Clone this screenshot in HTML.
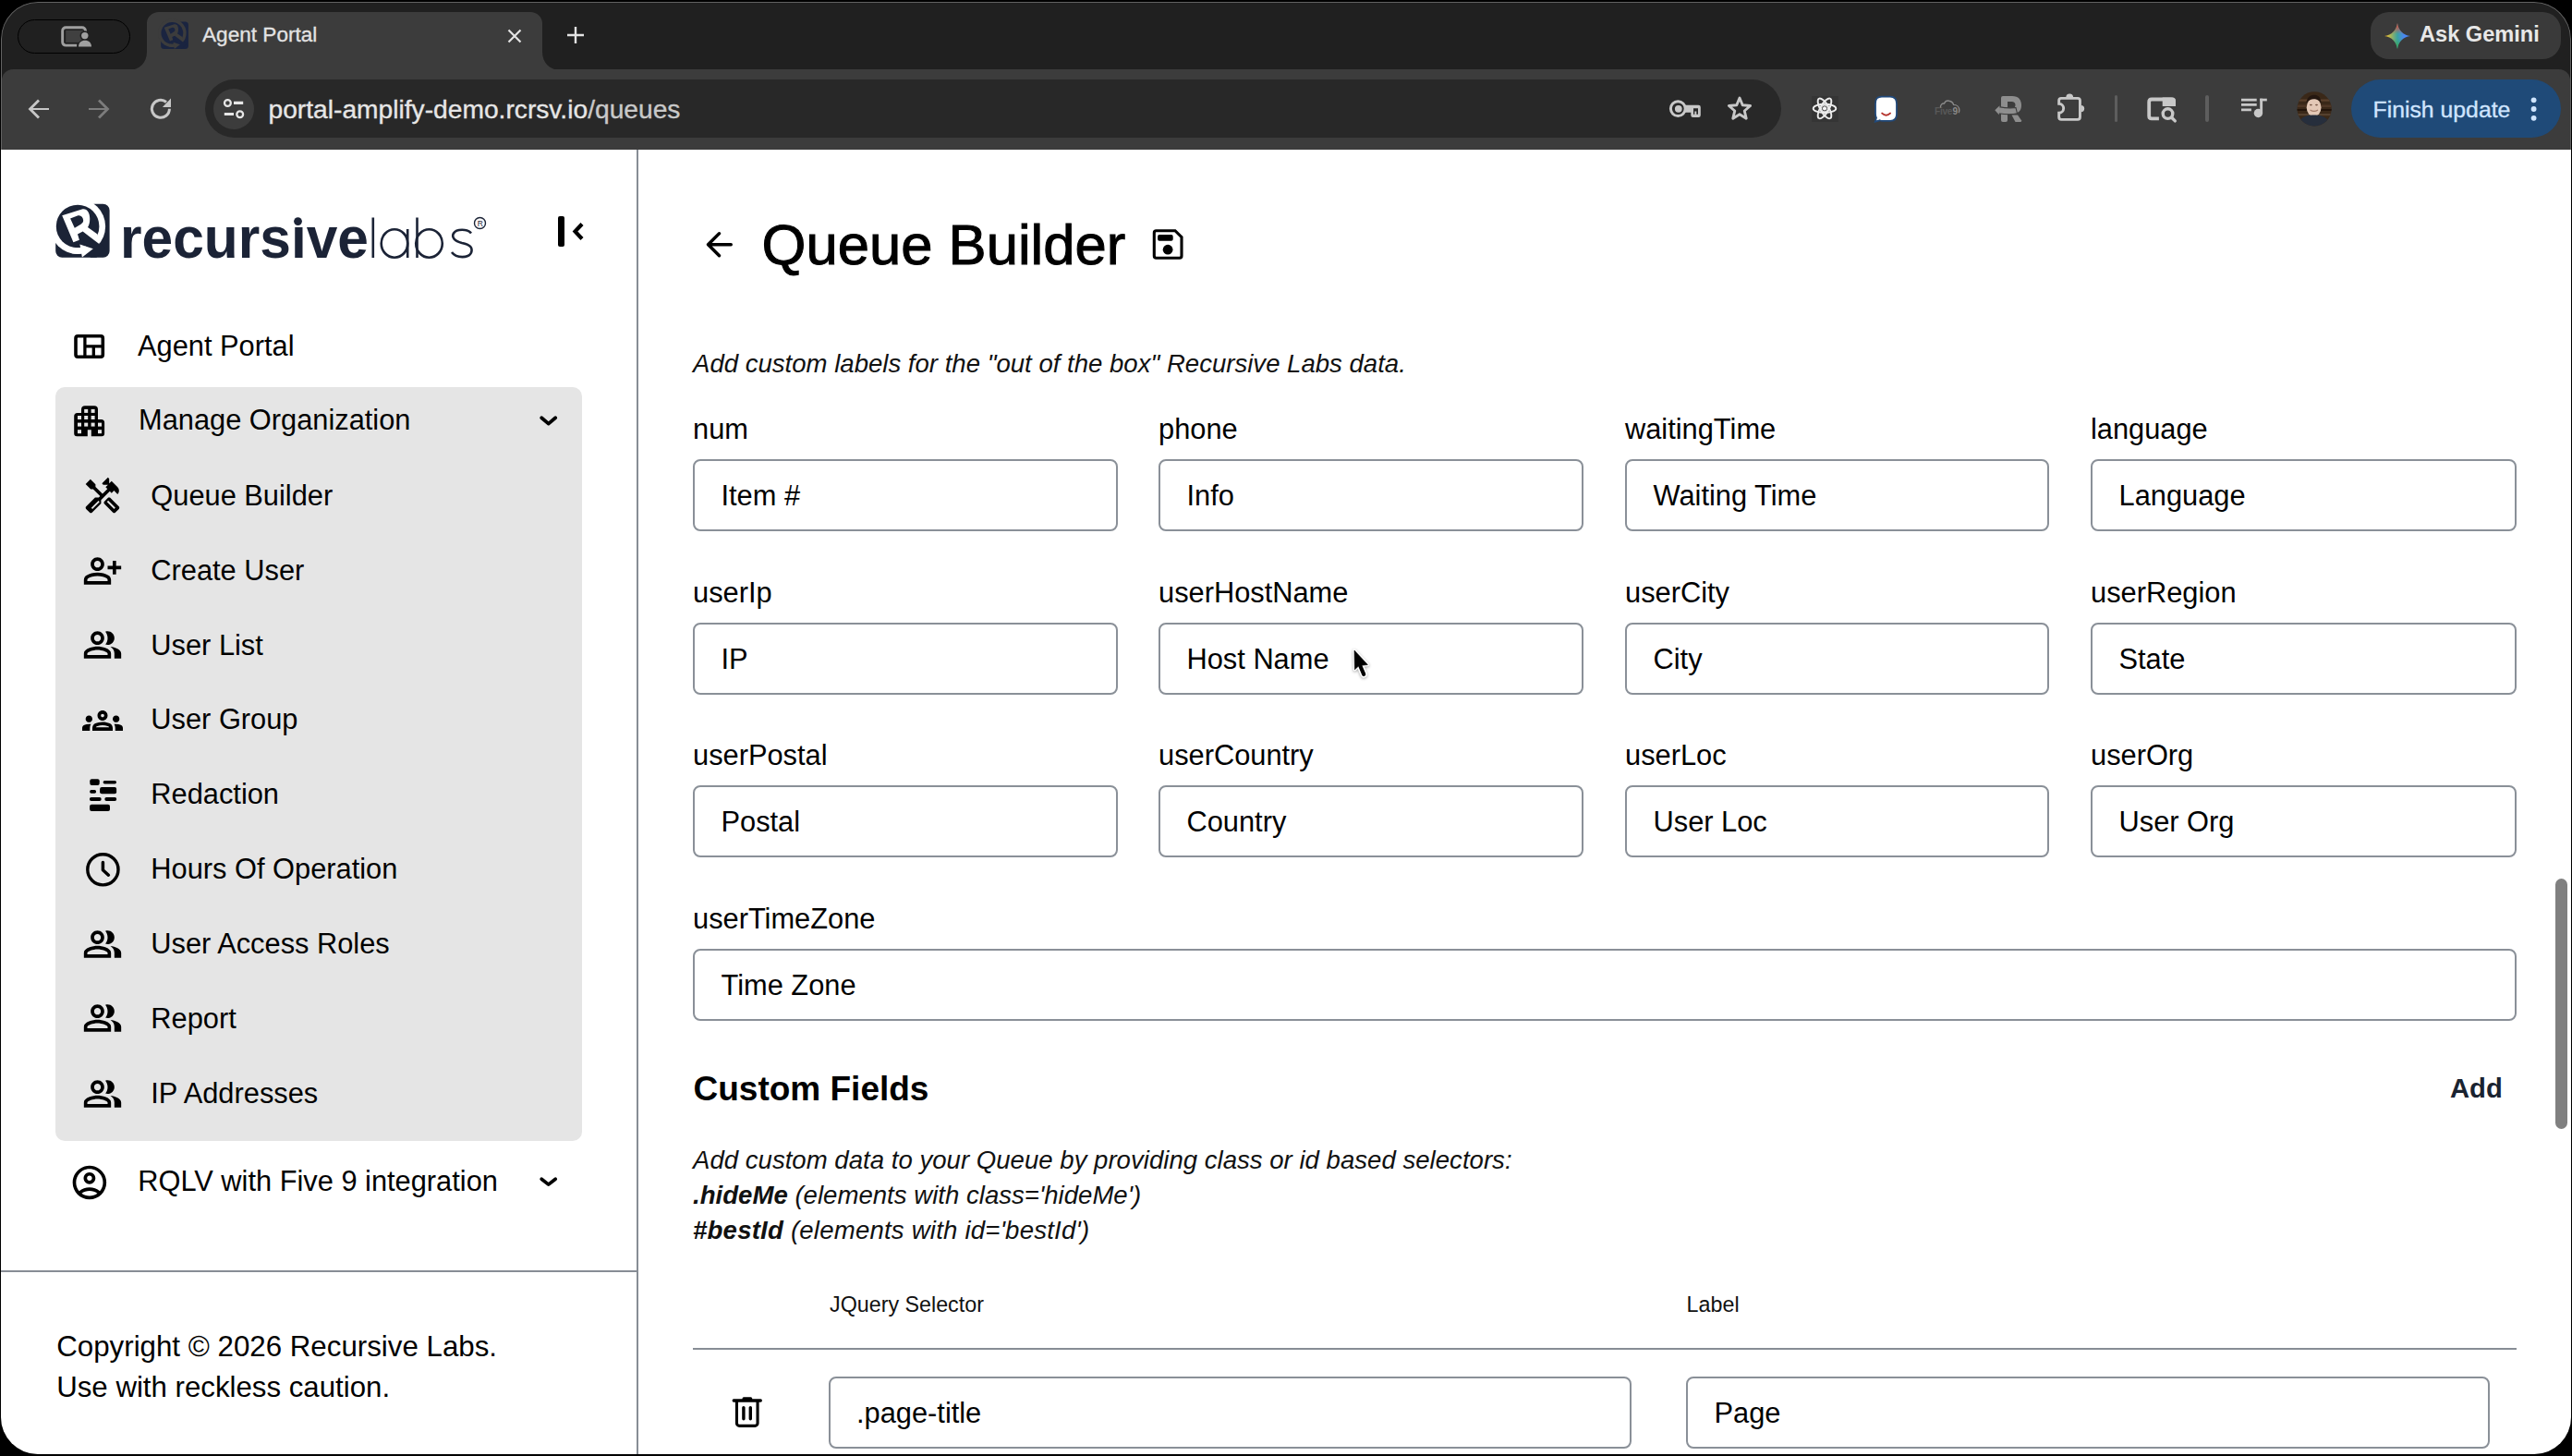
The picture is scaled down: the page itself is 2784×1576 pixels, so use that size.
<!DOCTYPE html><html><head><meta charset="utf-8"><style>
html,body{margin:0;padding:0;}
body{width:2784px;height:1576px;background:#000;position:relative;overflow:hidden;font-family:"Liberation Sans", sans-serif;}
#win{position:absolute;left:0;top:0;width:2784px;height:1576px;clip-path:inset(2px 1px 2px 1px round 40px);background:#202020;}
#page{position:absolute;left:0;top:162px;width:2784px;height:1420px;background:#fff;}
.t{position:absolute;white-space:nowrap;line-height:1;}
svg{overflow:visible}
</style></head><body>
<div id="win">
<div style="position:absolute;left:19px;top:21px;width:122px;height:37px;border:1.6px solid #000;border-radius:19px;box-sizing:border-box;"></div>
<svg style="position:absolute;left:58px;top:24px;" width="1" height="1" viewBox="0 0 1 1"><path d="M25.2 25.15 H13.2 A3.55 3.55 0 0 1 9.65 21.6 V9.3 A3.55 3.55 0 0 1 13.2 5.75 H30.9 A3.55 3.55 0 0 1 34.45 9.3 V9.9" fill="none" stroke="#a0a0a0" stroke-width="2.9"/><rect x="13.2" y="8.9" width="19" height="13" fill="#404040"/><circle cx="33.8" cy="14.6" r="5.3" fill="#212121"/><path d="M25.5 28 C25.5 21.6 29.5 18.4 34 18.4 C38.5 18.4 42.5 21.6 42.5 28 Z" fill="#212121"/><circle cx="33.8" cy="14.6" r="3.7" fill="#a0a0a0"/><path d="M27 26.6 C27 22.5 30 19.8 34 19.8 C38 19.8 41 22.5 41 26.6 Z" fill="#a0a0a0"/></svg>
<svg style="position:absolute;left:139px;top:12px" width="468" height="64" viewBox="0 0 468 64"><path d="M0 64 C12 64 20 56 20 44 V13 C20 6 26 1 33 1 H435 C442 1 448 6 448 13 V44 C448 56 456 64 468 64 Z" fill="#3c3c3c"/></svg>
<svg style="position:absolute;left:171.56px;top:21.3px" width="34.7" height="34.7" viewBox="0 0 68 68"><defs><clipPath id="fvc"><rect x="4.2" y="4.7" width="58.4" height="58.1" rx="7"/></clipPath></defs><path d="M40 4.7 H55.6 A7 7 0 0 1 62.6 11.7 V55.8 A7 7 0 0 1 55.6 62.8 H11.2 A7 7 0 0 1 4.2 55.8 V40 Z" fill="#1a2440"/><circle cx="28.1" cy="29" r="30" fill="#3c3c3c"/><path d="M45.7 0 L45.7 4.7 A30 30 0 0 0 4.2 47.1 L0 47.1 L0 0 Z" fill="#3c3c3c"/><circle cx="28.1" cy="29" r="23.3" fill="#1a2440"/><g clip-path="url(#fvc)"><path d="M28.1 29 L58 52 L44 68 Z" fill="#1a2440"/></g><path d="M30.4 48.5 L44.8 53.2 L32.9 62.6 Z" fill="#3c3c3c"/><path d="M24 52 A23.3 23.3 0 0 0 31.5 52.1 L32 58.5 A30 30 0 0 1 22 58.2 Z" fill="#3c3c3c"/><path d="M11.2 17.3 L32.7 10.5 C38.5 9 42 15 41.1 23.4 C40.8 26 40 28.5 39 29.9 L49.5 37.4 L51.6 48.3 L33.6 34.6 L28 37.4 L29.9 43.7 L23.4 46.2 Z M20.1 20.6 L24.8 30.8 L31.5 26.7 C33.2 25.6 34.4 24.2 34.1 22.2 C33.8 19 31.5 16.5 28.5 17.3 Z" fill="#3c3c3c" fill-rule="evenodd"/></svg>
<div class="t " style="left:219px;top:27.37px;font-size:22.6px;color:#e3e3e3;-webkit-text-stroke:0.3px #e3e3e3;">Agent Portal</div>
<svg style="position:absolute;left:549px;top:31px;" width="16" height="16" viewBox="0 0 16 16"><path d="M1.5 1.5 L14.5 14.5 M14.5 1.5 L1.5 14.5" stroke="#e3e3e3" stroke-width="2.2"/></svg>
<svg style="position:absolute;left:613px;top:28px;" width="20" height="20" viewBox="0 0 20 20"><path d="M10 1 V19 M1 10 H19" stroke="#e3e3e3" stroke-width="2.4"/></svg>
<div style="position:absolute;left:2566px;top:13px;width:206px;height:51px;background:#3a3a3a;border-radius:20px;"></div>
<svg style="position:absolute;left:2581px;top:25px" width="28" height="28" viewBox="0 0 28 28"><defs><linearGradient id="gh" x1="0" y1="0" x2="1" y2="0"><stop offset="0.05" stop-color="#f6c026"/><stop offset="0.5" stop-color="#3aa3a0"/><stop offset="0.75" stop-color="#4a86f0"/><stop offset="1" stop-color="#4285f4"/></linearGradient><linearGradient id="gv" x1="0" y1="0" x2="0" y2="1"><stop offset="0.05" stop-color="#e9473a"/><stop offset="0.42" stop-color="#e9473a" stop-opacity="0"/><stop offset="0.6" stop-color="#34a853" stop-opacity="0"/><stop offset="0.95" stop-color="#34a853"/></linearGradient></defs><path d="M14 0 C14.8 7.5 20.5 13.2 28 14 C20.5 14.8 14.8 20.5 14 28 C13.2 20.5 7.5 14.8 0 14 C7.5 13.2 13.2 7.5 14 0Z" fill="url(#gh)"/><path d="M14 0 C14.8 7.5 20.5 13.2 28 14 C20.5 14.8 14.8 20.5 14 28 C13.2 20.5 7.5 14.8 0 14 C7.5 13.2 13.2 7.5 14 0Z" fill="url(#gv)"/></svg>
<div class="t " style="left:2619px;top:26.02px;font-size:23.6px;color:#e8e8e8;font-weight:700;">Ask Gemini</div>
<div style="position:absolute;left:2px;top:75px;width:2780px;height:87px;background:#3c3c3c;border-radius:12px 12px 0 0;"></div>
<svg style="position:absolute;left:29px;top:106px;" width="25" height="24" viewBox="0 0 25 24"><path d="M24 11H6.5l7.5-7.5L12 1.5 1.5 12 12 22.5l2-2L6.5 13H24z" fill="#c7c7c7" transform="translate(0,0)"/></svg>
<svg style="position:absolute;left:95px;top:106px;" width="25" height="24" viewBox="0 0 25 24"><path d="M1 11h17.5L11 3.5 13 1.5 23.5 12 13 22.5l-2-2L18.5 13H1z" fill="#7c7c7c"/></svg>
<svg style="position:absolute;left:155px;top:100px;" width="40" height="36" viewBox="0 0 40 36"><path d="M28.4 17.75 A9.5 9.5 0 1 1 25.0 10.5" fill="none" stroke="#c7c7c7" stroke-width="3"/><path d="M30 6.55 V16.1 H20.9 Z" fill="#c7c7c7"/></svg>
<div style="position:absolute;left:222px;top:86px;width:1706px;height:63px;background:#282828;border-radius:32px;"></div>
<div style="position:absolute;left:231px;top:96px;width:44px;height:44px;background:#3c3c3c;border-radius:50%;"></div>
<svg style="position:absolute;left:240px;top:106px;" width="26" height="24" viewBox="0 0 26 24"><circle cx="6.4" cy="5.5" r="3.4" fill="none" stroke="#e6e6e6" stroke-width="2.3"/><path d="M13 5.45 H23.2" stroke="#e6e6e6" stroke-width="3.2"/><circle cx="19.7" cy="17.7" r="3.4" fill="none" stroke="#e6e6e6" stroke-width="2.3"/><path d="M2.8 17.5 H13" stroke="#e6e6e6" stroke-width="3.2"/></svg>
<div class="t " style="left:290.5px;top:103.63px;font-size:28.2px;color:#e6e6e6;-webkit-text-stroke:0.35px #e6e6e6;">portal-amplify-demo.rcrsv.io<span style="color:#c9c9c9;-webkit-text-stroke-color:#c9c9c9">/queues</span></div>
<svg style="position:absolute;left:1795px;top:95px;" width="1" height="1" viewBox="0 0 1 1"><circle cx="21.3" cy="22.6" r="7.9" fill="none" stroke="#c8c8c8" stroke-width="3"/><circle cx="21.8" cy="22.8" r="3.9" fill="#c8c8c8"/><path d="M28 18.8 H43.5 Q45.8 18.8 45.8 21.1 V29.7 Q45.8 32 43.5 32 H37.6 Q35.3 32 35.3 29.7 V26.8 H28 Z M38 22.3 V28.8 H39.3 V25.5 H41.3 V28.8 H43 V22.3 Z" fill="#c8c8c8" fill-rule="evenodd"/></svg>
<svg style="position:absolute;left:1867px;top:102px;" width="32" height="30" viewBox="0 0 32 30"><path d="M16 4 L19.2 11.75 L27.6 12.5 L21.25 18 L23.2 26.2 L16 21.8 L8.8 26.2 L10.75 18 L4.4 12.5 L12.8 11.75 Z" fill="none" stroke="#c8c8c8" stroke-width="2.9" stroke-linejoin="round"/></svg>
<div style="position:absolute;left:1961px;top:103.6px;width:29px;height:28.4px;background:#353535;"></div>
<svg style="position:absolute;left:1961px;top:103px;" width="29" height="29" viewBox="0 0 29 29"><g fill="none" stroke="#ececec" stroke-width="1.9"><ellipse cx="14" cy="14.4" rx="12.3" ry="4.6"/><ellipse cx="14" cy="14.4" rx="12.3" ry="4.6" transform="rotate(60 14 14.4)"/><ellipse cx="14" cy="14.4" rx="12.3" ry="4.6" transform="rotate(-60 14 14.4)"/></g><circle cx="14" cy="14.4" r="3.4" fill="#353535" stroke="#ececec" stroke-width="1.2"/><circle cx="14" cy="14.4" r="2.1" fill="#f4f4f4"/></svg>
<svg style="position:absolute;left:2027px;top:102px;" width="1" height="1" viewBox="0 0 1 1"><path d="M10 2.6 H19 C24 2.6 26 5 26 10 V21.5 C26 26.5 24 28.9 19 28.9 H11 C9.5 28.9 8.5 28.7 7.7 28.3 L2.8 29.7 L4 25.5 C3.2 24.5 3 23 3 21 V10 C3 5 5 2.6 10 2.6 Z" fill="#fff" stroke="#21497a" stroke-width="1.8"/><path d="M10.2 20.6 Q14.6 24.8 19 20.6" fill="none" stroke="#b5352e" stroke-width="2" stroke-linecap="round"/></svg>
<svg style="position:absolute;left:2080px;top:95px;" width="1" height="1" viewBox="0 0 1 1"><path d="M20.5 22 C20 18.5 22 16.8 24.5 17 C25.5 14.6 27.7 13.8 29.8 14.2 C32.2 14.5 34 16.2 34.6 18.4 C37.8 18.4 40.8 20.5 40.8 24.5 C40.8 25.8 40.4 26.5 40 27" fill="none" stroke="#8a8a8a" stroke-width="1.4"/><text x="14" y="28.7" font-family="Liberation Sans" font-size="10.2" font-weight="700" fill="#585858" letter-spacing="-0.3">Five</text><text x="33.5" y="28.7" font-family="Liberation Sans" font-size="10.2" font-weight="700" fill="#8a8a8a">9</text></svg>
<svg style="position:absolute;left:0px;top:0px;" width="1" height="1" viewBox="0 0 1 1"><g fill="#8e8e8e"><path d="M2166 106 A2 2 0 0 1 2168 104 H2178 C2185 104 2188 108 2188 114 C2188 120.5 2184 123 2178 123 H2166 Z M2173 110 V117.3 H2177.5 C2180 117.3 2181.5 116.2 2181.5 113.7 C2181.5 111.3 2180 110 2177.5 110 Z" fill-rule="evenodd"/><path d="M2166 123 H2173 V130 A2 2 0 0 1 2171 132 H2168 A2 2 0 0 1 2166 130 Z"/><path d="M2177.5 124.5 H2184 L2188 130.2 A1.3 1.3 0 0 1 2187 132 H2181.5 Z"/></g><path d="M2163.5 115.6 C2170 116.8 2176 117.2 2182 116.5 L2183.5 122.8 C2177 124.3 2170 123.8 2163.5 122.8 Z" fill="#8e8e8e" stroke="#3c3c3c" stroke-width="1.1"/><path d="M2159.3 119.3 L2164.5 114.2 L2163.8 124.3 Z" fill="#8e8e8e"/></svg>
<svg style="position:absolute;left:2215px;top:95px;" width="1" height="1" viewBox="0 0 1 1"><path d="M13.65 17.3 V13.85 A2.5 2.5 0 0 1 16.15 11.35 H33.95 A2.5 2.5 0 0 1 36.45 13.85 V31.85 A2.5 2.5 0 0 1 33.95 34.35 H16.15 A2.5 2.5 0 0 1 13.65 31.85 V27.3 A5 5 0 0 0 13.65 17.3 Z" fill="none" stroke="#c8c8c8" stroke-width="2.9"/><path d="M21.3 10.5 A3.9 3.9 0 0 1 29.1 10.5 Z M37.5 18.9 A3.7 3.7 0 0 1 37.5 26.3 Z" fill="#c8c8c8"/></svg>
<div style="position:absolute;left:2288.5px;top:103px;width:3.4px;height:29.4px;background:#5e5e5e;border-radius:2px;"></div>
<svg style="position:absolute;left:0px;top:0px;" width="1" height="1" viewBox="0 0 1 1"><path d="M2336.9 128.3 H2329 Q2326.2 128.3 2326.2 125.5 V110.3 Q2326.2 107.5 2329 107.5 H2350 Q2353.1 107.5 2353.1 110.6 V114.9" fill="none" stroke="#c8c8c8" stroke-width="3.8"/><path d="M2340.7 105.6 H2351.5 Q2355 105.6 2355 109.1 V114.9 H2340.7 Z" fill="#c8c8c8"/><circle cx="2346.5" cy="123.1" r="5.3" fill="none" stroke="#c8c8c8" stroke-width="3.4"/><path d="M2350.6 127.2 L2354.3 130.9" stroke="#c8c8c8" stroke-width="3.4" stroke-linecap="round"/></svg>
<div style="position:absolute;left:2387.3px;top:103px;width:3.4px;height:29.4px;background:#5e5e5e;border-radius:2px;"></div>
<svg style="position:absolute;left:0px;top:0px;" width="1" height="1" viewBox="0 0 1 1"><path d="M2426 108.05 H2442.7 M2426 113.45 H2442.7 M2426 118.95 H2436.9" stroke="#c8c8c8" stroke-width="2.8"/><rect x="2446.2" y="106.7" width="2.9" height="16" fill="#c8c8c8"/><rect x="2446.2" y="106.7" width="7.6" height="2.7" fill="#c8c8c8"/><circle cx="2444.4" cy="122.5" r="4.7" fill="#c8c8c8"/></svg>
<svg style="position:absolute;left:2480px;top:92px;" width="1" height="1" viewBox="0 0 1 1"><defs><clipPath id="av"><circle cx="25.1" cy="25.8" r="18.6"/></clipPath></defs><g clip-path="url(#av)"><rect x="0" y="0" width="52" height="52" fill="#3a2818"/><rect x="0" y="15.5" width="52" height="2.2" fill="#5b412c"/><rect x="0" y="21.5" width="52" height="2.5" fill="#4e3624"/><rect x="0" y="26" width="52" height="2" fill="#22140a"/><rect x="0" y="31" width="52" height="2.2" fill="#54402e"/><ellipse cx="24.6" cy="24.3" rx="7.9" ry="9.9" fill="#e3c8b6"/><path d="M16.4 20 C16.6 13 21.5 10.7 25 10.7 C29 10.7 32.3 13.2 32.6 20 C30.4 16.2 27.6 15.2 24.6 15.2 C21.3 15.2 18.6 16.6 16.4 20 Z" fill="#241710"/><ellipse cx="21.4" cy="21.6" rx="1.5" ry="0.8" fill="#7a5a48"/><ellipse cx="27.5" cy="21.6" rx="1.5" ry="0.8" fill="#7a5a48"/><path d="M20.5 27 Q24.8 29.8 29 27" fill="none" stroke="#a77f6c" stroke-width="1.1"/><path d="M6 46 C8 36 15 32 24.8 32.6 C34 32 41 36 43.5 46 Z" fill="#262e3c"/></g></svg>
<div style="position:absolute;left:2545px;top:86px;width:227px;height:63px;background:#1f4a78;border-radius:32px;"></div>
<div class="t " style="left:2568.5px;top:106.51px;font-size:24.8px;color:#cfe5ff;-webkit-text-stroke:0.35px #cfe5ff;">Finish update</div>
<svg style="position:absolute;left:0px;top:0px;" width="1" height="1" viewBox="0 0 1 1"><circle cx="2742.6" cy="108.3" r="2.9" fill="#cfe5ff"/><circle cx="2742.6" cy="118" r="2.9" fill="#cfe5ff"/><circle cx="2742.6" cy="127.8" r="2.9" fill="#cfe5ff"/></svg>
<div style="position:absolute;left:1px;top:2px;width:2782px;height:300px;border:1px solid #626262;border-bottom:none;border-radius:40px 40px 0 0;box-sizing:border-box;"></div>
<div id="page"></div>
<div style="position:absolute;left:689px;top:162px;width:2px;height:1420px;background:#878d95;"></div>
<div style="position:absolute;left:1px;top:1375px;width:689px;height:2px;background:#878d95;"></div>
<svg style="position:absolute;left:56px;top:216px;" width="68" height="68" viewBox="0 0 68 68"><defs><clipPath id="lgc"><rect x="4.2" y="4.7" width="58.4" height="58.1" rx="7"/></clipPath></defs><path d="M40 4.7 H55.6 A7 7 0 0 1 62.6 11.7 V55.8 A7 7 0 0 1 55.6 62.8 H11.2 A7 7 0 0 1 4.2 55.8 V40 Z" fill="#1b2336"/><circle cx="28.1" cy="29" r="30" fill="#fff"/><path d="M45.7 0 L45.7 4.7 A30 30 0 0 0 4.2 47.1 L0 47.1 L0 0 Z" fill="#fff"/><circle cx="28.1" cy="29" r="23.3" fill="#1b2336"/><g clip-path="url(#lgc)"><path d="M28.1 29 L58 52 L44 68 Z" fill="#1b2336"/></g><path d="M30.4 48.5 L44.8 53.2 L32.9 62.6 Z" fill="#fff"/><path d="M24 52 A23.3 23.3 0 0 0 31.5 52.1 L32 58.5 A30 30 0 0 1 22 58.2 Z" fill="#fff"/><path d="M11.2 17.3 L32.7 10.5 C38.5 9 42 15 41.1 23.4 C40.8 26 40 28.5 39 29.9 L49.5 37.4 L51.6 48.3 L33.6 34.6 L28 37.4 L29.9 43.7 L23.4 46.2 Z M20.1 20.6 L24.8 30.8 L31.5 26.7 C33.2 25.6 34.4 24.2 34.1 22.2 C33.8 19 31.5 16.5 28.5 17.3 Z" fill="#fff" fill-rule="evenodd"/></svg>
<div class="t" style="left:130px;top:226.11px;font-size:62.6px;font-weight:700;color:#1b2336;transform-origin:0 0;transform:scale(0.966,1);">recursive</div>
<div style="position:absolute;left:317px;top:231px;width:13px;height:13px;background:#fff;"></div>
<svg style="position:absolute;left:0px;top:0px;" width="1" height="1" viewBox="0 0 1 1"><circle cx="322.5" cy="239.6" r="4.4" fill="#1b2336"/></svg>
<svg style="position:absolute;left:398px;top:233px;" width="132" height="48" viewBox="0 0 132 48"><g fill="none" stroke="#1b2336" stroke-width="2.6"><path d="M5.8 2.5 V46"/><ellipse cx="29" cy="30.5" rx="14.3" ry="15.2"/><path d="M43.2 15 V46"/><path d="M53.5 2.5 V46"/><ellipse cx="66.5" cy="30.5" rx="14.3" ry="15.2"/><path d="M112 19.5 C108 14.5 96 14.5 93 19.5 C90.5 24 94 28 102 30 C111 32 114 35 112 40.5 C109.5 46.5 96 47 91 40"/></g><circle cx="121.5" cy="8.5" r="6" fill="none" stroke="#1b2336" stroke-width="1.4"/><text x="118.7" y="11.8" font-family="Liberation Sans" font-size="8.5" fill="#1b2336">R</text></svg>
<div style="position:absolute;left:604px;top:234px;width:7px;height:33px;background:#000;border-radius:2px;"></div>
<svg style="position:absolute;left:619px;top:240px;" width="14" height="21" viewBox="0 0 14 21"><path d="M11 2.5 L3.5 10.5 L11 18.5" fill="none" stroke="#000" stroke-width="4.2" stroke-linejoin="miter"/></svg>
<svg style="position:absolute;left:72px;top:350px;" width="50" height="50" viewBox="0 0 50 50"><rect x="10" y="13.8" width="29.3" height="22.4" rx="2.2" fill="none" stroke="#000" stroke-width="3.6"/><path d="M19.9 13.8 V36.2 M19.9 24.9 H39.3 M29.3 24.9 V36.2" stroke="#000" stroke-width="3.3" fill="none"/></svg>
<div class="t " style="left:149px;top:359.53px;font-size:30.8px;color:#000;">Agent Portal</div>
<div style="position:absolute;left:60px;top:419px;width:570px;height:816px;background:#e5e5e5;border-radius:10px;"></div>
<svg style="position:absolute;left:0px;top:0px;" width="1" height="1" viewBox="0 0 1 1"><path d="M88 443.3 A4 4 0 0 1 92 439.3 H102 A4 4 0 0 1 106 443.3 V454 H109.6 A3.5 3.5 0 0 1 113.1 457.5 V469.3 A3 3 0 0 1 110.1 472.3 H98.8 V465.2 H94.8 V472.3 H83.2 A3 3 0 0 1 80.2 469.3 V450.4 A3.5 3.5 0 0 1 83.7 446.9 H88 Z" fill="#000"/><g fill="#e5e5e5"><rect x="91.2" y="442.9" width="4" height="4"/><rect x="98.6" y="442.9" width="4" height="4"/><rect x="84.0" y="450.0" width="4" height="4"/><rect x="91.2" y="450.0" width="4" height="4"/><rect x="98.6" y="450.0" width="4" height="4"/><rect x="84.0" y="457.6" width="4" height="4"/><rect x="91.2" y="457.6" width="4" height="4"/><rect x="98.6" y="457.6" width="4" height="4"/><rect x="106.0" y="457.6" width="4" height="4"/><rect x="84.0" y="465.2" width="4" height="4"/><rect x="106.0" y="465.2" width="4" height="4"/></g></svg>
<div class="t " style="left:150px;top:439.63px;font-size:30.8px;color:#000;">Manage Organization</div>
<svg style="position:absolute;left:0px;top:0px;" width="1" height="1" viewBox="0 0 1 1"><path d="M586.2 452.3 L593.7 458.6 L601.2 452.3" fill="none" stroke="#000" stroke-width="3.8" stroke-linecap="round" stroke-linejoin="round"/></svg>
<div class="t " style="left:163.3px;top:522.43px;font-size:30.8px;color:#000;">Queue Builder</div>
<div class="t " style="left:163.3px;top:602.63px;font-size:30.8px;color:#000;">Create User</div>
<div class="t " style="left:163.3px;top:683.73px;font-size:30.8px;color:#000;">User List</div>
<div class="t " style="left:163.3px;top:763.93px;font-size:30.8px;color:#000;">User Group</div>
<div class="t " style="left:163.3px;top:845.23px;font-size:30.8px;color:#000;">Redaction</div>
<div class="t " style="left:163.3px;top:925.73px;font-size:30.8px;color:#000;">Hours Of Operation</div>
<div class="t " style="left:163.3px;top:1007.33px;font-size:30.8px;color:#000;">User Access Roles</div>
<div class="t " style="left:163.3px;top:1087.83px;font-size:30.8px;color:#000;">Report</div>
<div class="t " style="left:163.3px;top:1168.93px;font-size:30.8px;color:#000;">IP Addresses</div>
<svg style="position:absolute;left:89.30px;top:514.90px" width="44.0" height="44.0" viewBox="0 0 24 24"><path d="M21.67 18.17l-5.3-5.3h-.99l-2.54 2.54v.99l5.3 5.3c.39.39 1.02.39 1.41 0l2.12-2.12c.39-.38.39-1.02 0-1.41zm-2.83 1.42l-4.24-4.24.71-.71 4.24 4.24-.71.71zM17.34 10.19l1.41-1.41 2.12 2.12c1.17-1.17 1.17-3.07 0-4.24l-3.54-3.54-1.41 1.41V1.71l-.7-.71-3.54 3.54.71.71h2.83l-1.41 1.41 1.06 1.06-2.89 2.89-4.13-4.13V5.06L4.83 2.04 2 4.87 5.03 7.9h1.41l4.13 4.13-.85.85H7.6l-5.3 5.3c-.39.39-.39 1.02 0 1.41l2.12 2.12c.39.39 1.02.39 1.41 0l5.3-5.3v-2.12l5.15-5.15 1.06 1.05zm-7.06 5.24l-4.24 4.24-.71-.71 4.24-4.24.71.71z" fill="#000"/></svg>
<svg style="position:absolute;left:89.35px;top:595.60px" width="44.0" height="44.0" viewBox="0 0 24 24"><path d="M20 9V6h-2v3h-3v2h3v3h2v-3h3V9h-3zM9 12c2.21 0 4-1.79 4-4s-1.79-4-4-4-4 1.79-4 4 1.79 4 4 4zm0-6c1.1 0 2 .9 2 2s-.9 2-2 2-2-.9-2-2 .9-2 2-2zm6.39 8.56C13.71 13.7 11.53 13 9 13s-4.71.7-6.39 1.56C1.61 15.07 1 16.1 1 17.22V20h16v-2.78c0-1.12-.61-2.15-1.61-2.66zM15 18H3v-.78c0-.38.2-.72.52-.88C4.71 15.73 6.63 15 9 15c2.37 0 4.29.73 5.48 1.34.32.16.52.5.52.88V18z" fill="#000"/></svg>
<svg style="position:absolute;left:89.30px;top:676.30px" width="44.0" height="44.0" viewBox="0 0 24 24"><path d="M16.67 13.13C18.04 14.06 19 15.32 19 17v3h4v-3c0-2.18-3.57-3.47-6.33-3.87zM15 12c2.21 0 4-1.79 4-4s-1.79-4-4-4c-.47 0-.91.1-1.33.24C14.5 5.27 15 6.58 15 8s-.5 2.73-1.33 3.76c.42.14.86.24 1.33.24zM9 12c2.21 0 4-1.79 4-4s-1.79-4-4-4-4 1.79-4 4 1.79 4 4 4zm0-6c1.1 0 2 .9 2 2s-.9 2-2 2-2-.9-2-2 .9-2 2-2zM9 13c-2.67 0-8 1.34-8 4v3h16v-3c0-2.66-5.33-4-8-4zm6 5H3v-.99C3.2 16.29 6.3 15 9 15s5.8 1.29 6 2v1z" fill="#000"/></svg>
<svg style="position:absolute;left:89.30px;top:999.90px" width="44.0" height="44.0" viewBox="0 0 24 24"><path d="M16.67 13.13C18.04 14.06 19 15.32 19 17v3h4v-3c0-2.18-3.57-3.47-6.33-3.87zM15 12c2.21 0 4-1.79 4-4s-1.79-4-4-4c-.47 0-.91.1-1.33.24C14.5 5.27 15 6.58 15 8s-.5 2.73-1.33 3.76c.42.14.86.24 1.33.24zM9 12c2.21 0 4-1.79 4-4s-1.79-4-4-4-4 1.79-4 4 1.79 4 4 4zm0-6c1.1 0 2 .9 2 2s-.9 2-2 2-2-.9-2-2 .9-2 2-2zM9 13c-2.67 0-8 1.34-8 4v3h16v-3c0-2.66-5.33-4-8-4zm6 5H3v-.99C3.2 16.29 6.3 15 9 15s5.8 1.29 6 2v1z" fill="#000"/></svg>
<svg style="position:absolute;left:89.30px;top:1080.40px" width="44.0" height="44.0" viewBox="0 0 24 24"><path d="M16.67 13.13C18.04 14.06 19 15.32 19 17v3h4v-3c0-2.18-3.57-3.47-6.33-3.87zM15 12c2.21 0 4-1.79 4-4s-1.79-4-4-4c-.47 0-.91.1-1.33.24C14.5 5.27 15 6.58 15 8s-.5 2.73-1.33 3.76c.42.14.86.24 1.33.24zM9 12c2.21 0 4-1.79 4-4s-1.79-4-4-4-4 1.79-4 4 1.79 4 4 4zm0-6c1.1 0 2 .9 2 2s-.9 2-2 2-2-.9-2-2 .9-2 2-2zM9 13c-2.67 0-8 1.34-8 4v3h16v-3c0-2.66-5.33-4-8-4zm6 5H3v-.99C3.2 16.29 6.3 15 9 15s5.8 1.29 6 2v1z" fill="#000"/></svg>
<svg style="position:absolute;left:89.30px;top:1161.50px" width="44.0" height="44.0" viewBox="0 0 24 24"><path d="M16.67 13.13C18.04 14.06 19 15.32 19 17v3h4v-3c0-2.18-3.57-3.47-6.33-3.87zM15 12c2.21 0 4-1.79 4-4s-1.79-4-4-4c-.47 0-.91.1-1.33.24C14.5 5.27 15 6.58 15 8s-.5 2.73-1.33 3.76c.42.14.86.24 1.33.24zM9 12c2.21 0 4-1.79 4-4s-1.79-4-4-4-4 1.79-4 4 1.79 4 4 4zm0-6c1.1 0 2 .9 2 2s-.9 2-2 2-2-.9-2-2 .9-2 2-2zM9 13c-2.67 0-8 1.34-8 4v3h16v-3c0-2.66-5.33-4-8-4zm6 5H3v-.99C3.2 16.29 6.3 15 9 15s5.8 1.29 6 2v1z" fill="#000"/></svg>
<svg style="position:absolute;left:89.00px;top:757.70px" width="44.0" height="44.0" viewBox="0 0 24 24"><path d="M4 13c1.1 0 2-.9 2-2s-.9-2-2-2-2 .9-2 2 .9 2 2 2zm1.13 1.1c-.37-.06-.74-.1-1.13-.1-.99 0-1.93.21-2.78.58C.48 14.9 0 15.62 0 16.43V18h4.5v-1.61c0-.83.23-1.61.63-2.29zM20 13c1.1 0 2-.9 2-2s-.9-2-2-2-2 .9-2 2 .9 2 2 2zm4 3.43c0-.81-.48-1.530-1.22-1.85-.85-.37-1.79-.58-2.780-.58-.39 0-.76.04-1.13.1.4.68.63 1.46.63 2.29V18H24v-1.57zm-7.76-2.78c-1.17-.52-2.61-.9-4.24-.9-1.63 0-3.07.39-4.240.9C6.68 14.13 6 15.21 6 16.39V18h12v-1.61c0-1.18-.68-2.26-1.76-2.74zM8.07 16c.09-.23.13-.39.91-.69.97-.38 1.99-.56 3.02-.56s2.050.18 3.02.56c.77.3.81.46.91.69H8.07zM12 8c.55 0 1 .45 1 1s-.45 1-1 1-1-.45-1-1 .45-1 1-1m0-2c-1.66 0-3 1.34-3 3s1.34 3 3 3 3-1.34 3-3-1.34-3-3-3z" fill="#000"/></svg>
<svg style="position:absolute;left:0px;top:0px;" width="1" height="1" viewBox="0 0 1 1"><g stroke="#000" stroke-linecap="round" fill="#000"><rect x="97.3" y="843.2" width="10.4" height="6.8" rx="2" stroke="none"/><path d="M113.3 846.7 H124.3" stroke-width="3.4"/><path d="M98.9 856.9 H102.3" stroke-width="3.6"/><rect x="108.1" y="852" width="18" height="7.3" rx="2" stroke="none"/><path d="M98.8 865 H107.8 M115.2 865 H124.3" stroke-width="3.8"/><rect x="97.1" y="870.7" width="21.9" height="7.2" rx="2" stroke="none"/></g></svg>
<svg style="position:absolute;left:0px;top:0px;" width="1" height="1" viewBox="0 0 1 1"><circle cx="111.4" cy="941.3" r="16.6" fill="none" stroke="#000" stroke-width="3.4"/><path d="M111.4 933.4 V941.8 L117.4 947.2" fill="none" stroke="#000" stroke-width="3.5" stroke-linecap="round" stroke-linejoin="round"/></svg>
<svg style="position:absolute;left:74.60px;top:1257.60px" width="43.8" height="43.8" viewBox="0 0 24 24"><path d="M12 2C6.48 2 2 6.48 2 12s4.48 10 10 10 10-4.48 10-10S17.52 2 12 2zM7.35 18.5C8.66 17.56 10.26 17 12 17s3.34.56 4.65 1.5c-1.31.94-2.91 1.5-4.65 1.5s-3.34-.56-4.65-1.5zm10.79-1.380C16.45 15.8 14.32 15 12 15s-4.45.8-6.14 2.12C4.7 15.73 4 13.95 4 12c0-4.42 3.58-8 8-8s8 3.58 8 8c0 1.95-.7 3.73-1.86 5.12zM12 6c-1.93 0-3.5 1.57-3.5 3.5S10.07 13 12 13s3.5-1.57 3.5-3.5S13.930 6 12 6zm0 5c-.83 0-1.5-.67-1.5-1.5S11.17 8 12 8s1.5.67 1.5 1.5S12.83 11 12 11z" fill="#000"/></svg>
<div class="t " style="left:149.2px;top:1264.33px;font-size:30.8px;color:#000;">RQLV with Five 9 integration</div>
<svg style="position:absolute;left:0px;top:0px;" width="1" height="1" viewBox="0 0 1 1"><path d="M586.2 1276.2 L593.7 1282.1 L601.2 1276.2" fill="none" stroke="#000" stroke-width="3.7" stroke-linecap="round" stroke-linejoin="round"/></svg>
<div class="t " style="left:61.2px;top:1441.71px;font-size:31.29px;color:#000;">Copyright &copy; 2026 Recursive Labs.</div>
<div class="t " style="left:61.2px;top:1485.86px;font-size:31.23px;color:#000;">Use with reckless caution.</div>
<svg style="position:absolute;left:755px;top:235px;" width="50" height="60" viewBox="0 0 50 60"><path d="M36.3 29.7 H12 M23.5 17.7 L11.5 29.7 L23.5 41.8" fill="none" stroke="#000" stroke-width="3.4" stroke-linecap="round" stroke-linejoin="round"/></svg>
<div class="t " style="left:824.5px;top:234.46px;font-size:61.6px;color:#000;-webkit-text-stroke:1px #000;">Queue Builder</div>
<svg style="position:absolute;left:0px;top:0px;" width="1" height="1" viewBox="0 0 1 1"><path d="M1251.5 249.7 H1272 L1279 256.7 V277 Q1279 279.2 1276.8 279.2 H1251.5 Q1249.3 279.2 1249.3 277 V251.9 Q1249.3 249.7 1251.5 249.7 Z" fill="none" stroke="#000" stroke-width="3.1"/><rect x="1253.1" y="254.1" width="16.6" height="6.7" rx="1.8" fill="#000"/><circle cx="1264.1" cy="270.2" r="5.4" fill="#000"/></svg>
<div class="t " style="left:750px;top:379.66px;font-size:27.57px;color:#111;font-style:italic;">Add custom labels for the "out of the box" Recursive Labs data.</div>
<div class="t " style="left:750px;top:449.63px;font-size:30.8px;color:#000;">num</div>
<div style="position:absolute;left:750px;top:497px;width:460px;height:78px;border:2px solid #8a9098;border-radius:8px;box-sizing:border-box;background:#fff;"></div>
<div class="t " style="left:780.5px;top:521.93px;font-size:30.8px;color:#000;">Item #</div>
<div class="t " style="left:1254px;top:449.63px;font-size:30.8px;color:#000;">phone</div>
<div style="position:absolute;left:1254px;top:497px;width:460px;height:78px;border:2px solid #8a9098;border-radius:8px;box-sizing:border-box;background:#fff;"></div>
<div class="t " style="left:1284.5px;top:521.93px;font-size:30.8px;color:#000;">Info</div>
<div class="t " style="left:1759px;top:449.63px;font-size:30.8px;color:#000;">waitingTime</div>
<div style="position:absolute;left:1759px;top:497px;width:459px;height:78px;border:2px solid #8a9098;border-radius:8px;box-sizing:border-box;background:#fff;"></div>
<div class="t " style="left:1789.5px;top:521.93px;font-size:30.8px;color:#000;">Waiting Time</div>
<div class="t " style="left:2263px;top:449.63px;font-size:30.8px;color:#000;">language</div>
<div style="position:absolute;left:2263px;top:497px;width:461px;height:78px;border:2px solid #8a9098;border-radius:8px;box-sizing:border-box;background:#fff;"></div>
<div class="t " style="left:2293.5px;top:521.93px;font-size:30.8px;color:#000;">Language</div>
<div class="t " style="left:750px;top:626.63px;font-size:30.8px;color:#000;">userIp</div>
<div style="position:absolute;left:750px;top:674px;width:460px;height:78px;border:2px solid #8a9098;border-radius:8px;box-sizing:border-box;background:#fff;"></div>
<div class="t " style="left:780.5px;top:698.93px;font-size:30.8px;color:#000;">IP</div>
<div class="t " style="left:1254px;top:626.63px;font-size:30.8px;color:#000;">userHostName</div>
<div style="position:absolute;left:1254px;top:674px;width:460px;height:78px;border:2px solid #8a9098;border-radius:8px;box-sizing:border-box;background:#fff;"></div>
<div class="t " style="left:1284.5px;top:698.93px;font-size:30.8px;color:#000;">Host Name</div>
<div class="t " style="left:1759px;top:626.63px;font-size:30.8px;color:#000;">userCity</div>
<div style="position:absolute;left:1759px;top:674px;width:459px;height:78px;border:2px solid #8a9098;border-radius:8px;box-sizing:border-box;background:#fff;"></div>
<div class="t " style="left:1789.5px;top:698.93px;font-size:30.8px;color:#000;">City</div>
<div class="t " style="left:2263px;top:626.63px;font-size:30.8px;color:#000;">userRegion</div>
<div style="position:absolute;left:2263px;top:674px;width:461px;height:78px;border:2px solid #8a9098;border-radius:8px;box-sizing:border-box;background:#fff;"></div>
<div class="t " style="left:2293.5px;top:698.93px;font-size:30.8px;color:#000;">State</div>
<div class="t " style="left:750px;top:802.63px;font-size:30.8px;color:#000;">userPostal</div>
<div style="position:absolute;left:750px;top:850px;width:460px;height:78px;border:2px solid #8a9098;border-radius:8px;box-sizing:border-box;background:#fff;"></div>
<div class="t " style="left:780.5px;top:874.93px;font-size:30.8px;color:#000;">Postal</div>
<div class="t " style="left:1254px;top:802.63px;font-size:30.8px;color:#000;">userCountry</div>
<div style="position:absolute;left:1254px;top:850px;width:460px;height:78px;border:2px solid #8a9098;border-radius:8px;box-sizing:border-box;background:#fff;"></div>
<div class="t " style="left:1284.5px;top:874.93px;font-size:30.8px;color:#000;">Country</div>
<div class="t " style="left:1759px;top:802.63px;font-size:30.8px;color:#000;">userLoc</div>
<div style="position:absolute;left:1759px;top:850px;width:459px;height:78px;border:2px solid #8a9098;border-radius:8px;box-sizing:border-box;background:#fff;"></div>
<div class="t " style="left:1789.5px;top:874.93px;font-size:30.8px;color:#000;">User Loc</div>
<div class="t " style="left:2263px;top:802.63px;font-size:30.8px;color:#000;">userOrg</div>
<div style="position:absolute;left:2263px;top:850px;width:461px;height:78px;border:2px solid #8a9098;border-radius:8px;box-sizing:border-box;background:#fff;"></div>
<div class="t " style="left:2293.5px;top:874.93px;font-size:30.8px;color:#000;">User Org</div>
<div class="t " style="left:750px;top:979.63px;font-size:30.8px;color:#000;">userTimeZone</div>
<div style="position:absolute;left:750px;top:1027px;width:1974px;height:78px;border:2px solid #8a9098;border-radius:8px;box-sizing:border-box;background:#fff;"></div>
<div class="t " style="left:780.5px;top:1051.93px;font-size:30.8px;color:#000;">Time Zone</div>
<div class="t " style="left:750.5px;top:1159.68px;font-size:37px;color:#000;font-weight:700;">Custom Fields</div>
<div class="t " style="left:2652px;top:1164.08px;font-size:29.2px;color:#1a2330;font-weight:700;">Add</div>
<div class="t " style="left:750px;top:1241.64px;font-size:27.6px;color:#111;font-style:italic;">Add custom data to your Queue by providing class or id based selectors:</div>
<div class="t " style="left:750px;top:1280.04px;font-size:27.6px;color:#111;font-style:italic;"><b>.hideMe</b> (elements with class='hideMe')</div>
<div class="t " style="left:750px;top:1318.14px;font-size:27.6px;color:#111;font-style:italic;letter-spacing:0.2px;"><b>#bestId</b> (elements with id='bestId')</div>
<div class="t " style="left:898px;top:1401.29px;font-size:23.29px;color:#111;">JQuery Selector</div>
<div class="t " style="left:1825.6px;top:1401.29px;font-size:23.29px;color:#111;">Label</div>
<div style="position:absolute;left:750px;top:1459px;width:1974px;height:2px;background:#878d95;"></div>
<svg style="position:absolute;left:0px;top:0px;" width="1" height="1" viewBox="0 0 1 1"><path d="M794.2 1516 H823.3" stroke="#000" stroke-width="3.3" stroke-linecap="round"/><rect x="803.5" y="1512.2" width="10.7" height="4" rx="1.5" fill="#000"/><path d="M797.45 1516.5 V1540.5 A2.85 2.85 0 0 0 800.3 1543.35 H817.2 A2.85 2.85 0 0 0 820.05 1540.5 V1516.5" fill="none" stroke="#000" stroke-width="3.1"/><path d="M804.9 1523.6 V1535.8 M812.3 1523.6 V1535.8" stroke="#000" stroke-width="3.4" stroke-linecap="round"/></svg>
<div style="position:absolute;left:897px;top:1490px;width:869px;height:78px;border:2px solid #8a9098;border-radius:8px;box-sizing:border-box;background:#fff;"></div>
<div class="t " style="left:927px;top:1514.93px;font-size:30.8px;color:#000;">.page-title</div>
<div style="position:absolute;left:1825px;top:1490px;width:870px;height:78px;border:2px solid #8a9098;border-radius:8px;box-sizing:border-box;background:#fff;"></div>
<div class="t " style="left:1855.5px;top:1514.93px;font-size:30.8px;color:#000;">Page</div>
<div style="position:absolute;left:2766px;top:951px;width:13px;height:271px;background:#808080;border-radius:7px;"></div>
<svg style="position:absolute;left:1466.2px;top:704px;" width="1" height="1" viewBox="0 0 1 1"><g transform="translate(0,0)" style="filter:drop-shadow(0 1px 1.5px rgba(0,0,0,0.35))"><path d="M0 0 L0.4 20.8 L5 16.6 L14.4 15.5 Z" fill="#fff" stroke="#fff" stroke-width="3.4" stroke-linejoin="round"/><path d="M6.2 16.5 L10.2 25.8" stroke="#fff" stroke-width="7.4" stroke-linecap="round"/><path d="M0 0 L0.4 20.8 L5 16.6 L14.4 15.5 Z" fill="#000" stroke="#000" stroke-width="0.6" stroke-linejoin="round"/><path d="M6.2 16.5 L10.2 25.8" stroke="#000" stroke-width="4.2" stroke-linecap="round"/></g></svg>
</div>
</body></html>
